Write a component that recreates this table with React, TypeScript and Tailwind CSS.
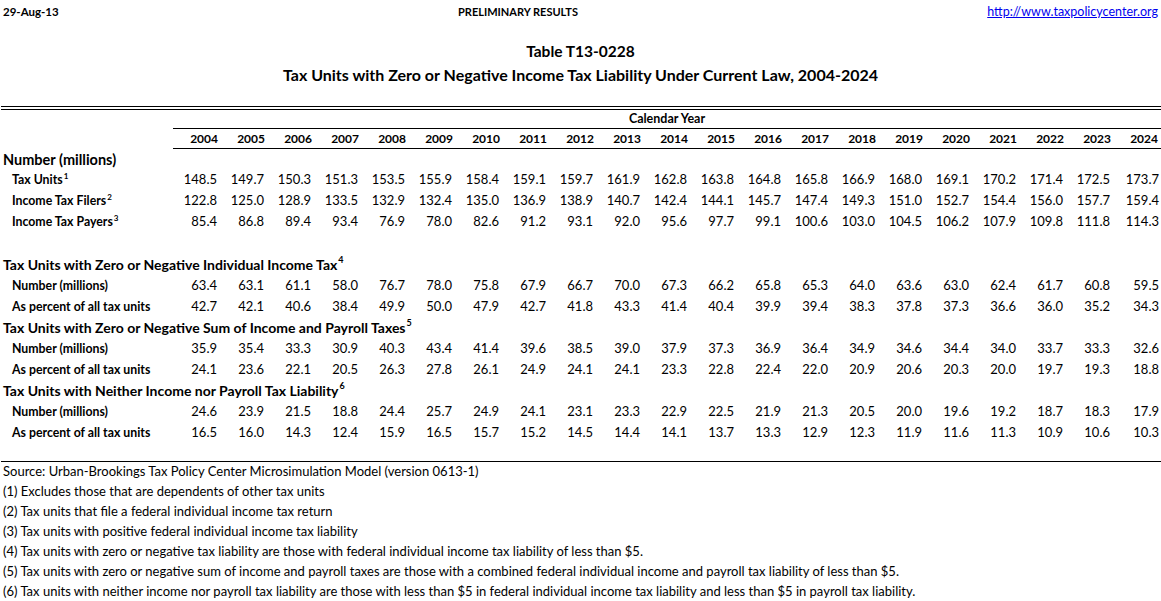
import React from 'react';

const years = Array.from({ length: 21 }, (_, i) => String(2004 + i));

type Row = { label: string; sup?: string; values: string[] };

const numberRows: Row[] = [
  { label: 'Tax Units', sup: '1', values: '148.5 149.7 150.3 151.3 153.5 155.9 158.4 159.1 159.7 161.9 162.8 163.8 164.8 165.8 166.9 168.0 169.1 170.2 171.4 172.5 173.7'.split(' ') },
  { label: 'Income Tax Filers', sup: '2', values: '122.8 125.0 128.9 133.5 132.9 132.4 135.0 136.9 138.9 140.7 142.4 144.1 145.7 147.4 149.3 151.0 152.7 154.4 156.0 157.7 159.4'.split(' ') },
  { label: 'Income Tax Payers', sup: '3', values: '85.4 86.8 89.4 93.4 76.9 78.0 82.6 91.2 93.1 92.0 95.6 97.7 99.1 100.6 103.0 104.5 106.2 107.9 109.8 111.8 114.3'.split(' ') },
];

const sections: { title: string; sup: string; rows: Row[] }[] = [
  {
    title: 'Tax Units with Zero or Negative Individual Income Tax',
    sup: '4',
    rows: [
      { label: 'Number (millions)', values: '63.4 63.1 61.1 58.0 76.7 78.0 75.8 67.9 66.7 70.0 67.3 66.2 65.8 65.3 64.0 63.6 63.0 62.4 61.7 60.8 59.5'.split(' ') },
      { label: 'As percent of all tax units', values: '42.7 42.1 40.6 38.4 49.9 50.0 47.9 42.7 41.8 43.3 41.4 40.4 39.9 39.4 38.3 37.8 37.3 36.6 36.0 35.2 34.3'.split(' ') },
    ],
  },
  {
    title: 'Tax Units with Zero or Negative Sum of Income and Payroll Taxes',
    sup: '5',
    rows: [
      { label: 'Number (millions)', values: '35.9 35.4 33.3 30.9 40.3 43.4 41.4 39.6 38.5 39.0 37.9 37.3 36.9 36.4 34.9 34.6 34.4 34.0 33.7 33.3 32.6'.split(' ') },
      { label: 'As percent of all tax units', values: '24.1 23.6 22.1 20.5 26.3 27.8 26.1 24.9 24.1 24.1 23.3 22.8 22.4 22.0 20.9 20.6 20.3 20.0 19.7 19.3 18.8'.split(' ') },
    ],
  },
  {
    title: 'Tax Units with Neither Income nor Payroll Tax Liability',
    sup: '6',
    rows: [
      { label: 'Number (millions)', values: '24.6 23.9 21.5 18.8 24.4 25.7 24.9 24.1 23.1 23.3 22.9 22.5 21.9 21.3 20.5 20.0 19.6 19.2 18.7 18.3 17.9'.split(' ') },
      { label: 'As percent of all tax units', values: '16.5 16.0 14.3 12.4 15.9 16.5 15.7 15.2 14.5 14.4 14.1 13.7 13.3 12.9 12.3 11.9 11.6 11.3 10.9 10.6 10.3'.split(' ') },
    ],
  },
];

const notes = [
  'Source: Urban-Brookings Tax Policy Center Microsimulation Model (version 0613-1)',
  '(1) Excludes those that are dependents of other tax units',
  '(2) Tax units that file a federal individual income tax return',
  '(3) Tax units with positive federal individual income tax liability',
  '(4) Tax units with zero or negative tax liability are those with federal individual income tax liability of less than $5.',
  '(5) Tax units with zero or negative sum of income and payroll taxes are those with a combined federal individual income and payroll tax liability of less than $5.',
  '(6) Tax units with neither income nor payroll tax liability are those with less than $5 in federal individual income tax liability and less than $5 in payroll tax liability.',
];

const grid = 'grid grid-cols-[172px_repeat(20,47px)_49px]';

function DataRow({ row }: { row: Row }) {
  return (
    <div className={`${grid} h-[21px] pt-[1px] items-baseline`}>
      <div className="pl-[12px] text-[12.3px] font-bold whitespace-nowrap">
        {row.label}
        {row.sup && <span className="relative -top-[5px] text-[8px] ml-[1px]">{row.sup}</span>}
      </div>
      {row.values.map((v, i) => (
        <div key={i} className="pr-[2px] text-right text-[13px]">
          {v}
        </div>
      ))}
    </div>
  );
}

function SectionTitle({ title, sup }: { title: string; sup: string }) {
  return (
    <div className="h-[21px] flex items-center pl-[3px] text-[14px] font-bold whitespace-nowrap">
      {title}
      <span className="relative -top-[5px] text-[9px] ml-[1px]">{sup}</span>
    </div>
  );
}

export default function App() {
  return (
    <div className="w-[1161px] h-[601px] bg-white text-black font-['Lato',sans-serif] overflow-hidden">
      {/* header */}
      <div className="h-[24px] flex items-center px-[3px] text-[11.5px] font-bold">
        <span className="w-[455px]">29-Aug-13</span>
        <span className="text-[11px]">PRELIMINARY RESULTS</span>
        <a className="flex-1 text-right font-normal text-[12.5px] text-[#0000ee] underline" href="#">
          http://www.taxpolicycenter.org
        </a>
      </div>

      <div className="mt-[17px] h-[22px] flex items-center justify-center text-[15.5px] font-bold">
        Table T13-0228
      </div>
      <div className="mt-[1px] h-[22px] flex items-center justify-center text-[16px] font-bold">
        Tax Units with Zero or Negative Income Tax Liability Under Current Law, 2004-2024
      </div>

      {/* double rule */}
      <div className="mt-[20px] ml-[1px] h-[4px] border-y border-black" />

      {/* calendar year */}
      <div className="flex h-[19px]">
        <div className="w-[173px]" />
        <div className="flex-1 border-b border-black flex items-center justify-center text-[12.5px] font-bold">
          Calendar Year
        </div>
      </div>

      {/* years */}
      <div className="flex h-[20px]">
        <div className="w-[173px]" />
        <div className="flex-1 border-b border-black">
          <div className="grid grid-cols-[46px_repeat(20,47px)] h-full items-center">
            {years.map((y) => (
              <div key={y} className="pr-[1px] text-right text-[12px] font-bold">
                {y}
              </div>
            ))}
          </div>
        </div>
      </div>

      <div className="h-[20px] flex items-center pl-[3px] pt-[1px] text-[14.5px] font-bold">Number (millions)</div>
      {numberRows.map((r) => (
        <DataRow key={r.label} row={r} />
      ))}

      <div className="h-[22px]" />
      {sections.map((s) => (
        <div key={s.title}>
          <SectionTitle title={s.title} sup={s.sup} />
          {s.rows.map((r) => (
            <DataRow key={r.label} row={r} />
          ))}
        </div>
      ))}

      {/* notes */}
      <div className="mt-[18px] ml-[1px] border-t border-black">
        {notes.map((n) => (
          <div key={n} className="h-[20px] flex items-center pl-[2px] text-[13px] whitespace-nowrap">
            {n}
          </div>
        ))}
      </div>
    </div>
  );
}
